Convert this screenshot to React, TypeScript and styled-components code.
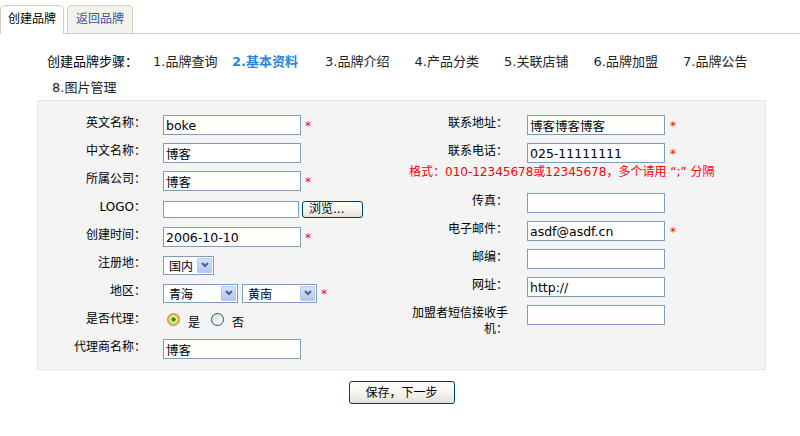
import styled, { createGlobalStyle } from "styled-components";

const FONT = `"DejaVu Sans", "Noto Sans CJK SC", sans-serif`;

const GlobalStyle = createGlobalStyle`
  html, body {
    margin: 0;
    padding: 0;
    background: #fff;
  }
  body {
    font-family: ${FONT};
    font-size: 12px;
    color: #000;
  }
`;

type Side = "left" | "right";

const steps = [
  { text: "1.品牌查询", w: 79 },
  { text: "2.基本资料", w: 93, active: true },
  { text: "3.品牌介绍", w: 89.5 },
  { text: "4.产品分类", w: 89.5 },
  { text: "5.关联店铺", w: 89.5 },
  { text: "6.品牌加盟", w: 89.5 },
  { text: "7.品牌公告", w: 89.5 },
  { text: "8.图片管理", w: 89.5 },
];

export default function App() {
  return (
    <Page>
      <GlobalStyle />
      <TabBar>
        <Tab $active>创建品牌</Tab>
        <Tab>返回品牌</Tab>
      </TabBar>

      <Steps>
        <StepsTitle>创建品牌步骤：</StepsTitle>
        {steps.map((s) => (
          <Step key={s.text} $w={s.w} $active={s.active}>
            {s.text}
          </Step>
        ))}
      </Steps>

      <Panel>
        <Column>
          <Row $side="left">
            <Label>英文名称：</Label>
            <Field>
              <Input defaultValue="boke" />
              <Star>*</Star>
            </Field>
          </Row>
          <Row $side="left">
            <Label>中文名称：</Label>
            <Field>
              <Input defaultValue="博客" />
            </Field>
          </Row>
          <Row $side="left">
            <Label>所属公司：</Label>
            <Field>
              <Input defaultValue="博客" />
              <Star>*</Star>
            </Field>
          </Row>
          <Row $side="left">
            <Label>LOGO：</Label>
            <Field $gap={3}>
              <Input $w={136} $h={17} />
              <Button $w={61} $h={17} $left>
                浏览...
              </Button>
            </Field>
          </Row>
          <Row $side="left">
            <Label>创建时间：</Label>
            <Field>
              <Input defaultValue="2006-10-10" />
              <Star>*</Star>
            </Field>
          </Row>
          <Row $side="left">
            <Label>注册地：</Label>
            <Field>
              <Select $w={51}>
                国内
                <Arrow>
                  <Chevron />
                </Arrow>
              </Select>
            </Field>
          </Row>
          <Row $side="left">
            <Label>地区：</Label>
            <Field>
              <Select $w={75}>
                青海
                <Arrow>
                  <Chevron />
                </Arrow>
              </Select>
              <Select $w={75}>
                黄南
                <Arrow>
                  <Chevron />
                </Arrow>
              </Select>
              <Star>*</Star>
            </Field>
          </Row>
          <Row $side="left">
            <Label>是否代理：</Label>
            <Field>
              <RadioGroup>
                <RadioOption>
                  <Radio $checked />是
                </RadioOption>
                <RadioOption>
                  <Radio />否
                </RadioOption>
              </RadioGroup>
            </Field>
          </Row>
          <Row $side="left">
            <Label>代理商名称：</Label>
            <Field>
              <Input defaultValue="博客" />
            </Field>
          </Row>
        </Column>

        <Column>
          <Row $side="right">
            <Label>联系地址：</Label>
            <Field $gap={5}>
              <Input defaultValue="博客博客博客" />
              <Star>*</Star>
            </Field>
          </Row>
          <Row $side="right">
            <Label>联系电话：</Label>
            <Field $gap={5}>
              <Input defaultValue="025-11111111" />
              <Star>*</Star>
            </Field>
          </Row>
          <Hint>格式：010-12345678或12345678，多个请用 “;” 分隔</Hint>
          <Row $side="right">
            <Label>传真：</Label>
            <Field>
              <Input />
            </Field>
          </Row>
          <Row $side="right">
            <Label>电子邮件：</Label>
            <Field $gap={5}>
              <Input defaultValue="asdf@asdf.cn" />
              <Star>*</Star>
            </Field>
          </Row>
          <Row $side="right">
            <Label>邮编：</Label>
            <Field>
              <Input />
            </Field>
          </Row>
          <Row $side="right">
            <Label>网址：</Label>
            <Field>
              <Input defaultValue="http://" />
            </Field>
          </Row>
          <Row $side="right">
            <Label>加盟者短信接收手机：</Label>
            <Field>
              <Input />
            </Field>
          </Row>
        </Column>
      </Panel>

      <Footer>
        <Button $w={106} $h={23}>
          保存，下一步
        </Button>
      </Footer>
    </Page>
  );
}

function Chevron() {
  return (
    <svg width="8" height="6" viewBox="0 0 8 6">
      <polyline
        points="1,1 4,4 7,1"
        fill="none"
        stroke="#4d6185"
        strokeWidth="2"
      />
    </svg>
  );
}

const Page = styled.div`
  width: 800px;
`;

const TabBar = styled.div`
  display: flex;
  align-items: flex-end;
  gap: 3px;
  height: 28px;
  padding-top: 5px;
  border-bottom: 1px solid #d3d0bd;
`;

const Tab = styled.div<{ $active?: boolean }>`
  box-sizing: border-box;
  height: ${(p) => (p.$active ? 29 : 28)}px;
  margin-bottom: ${(p) => (p.$active ? -1 : 0)}px;
  padding: 0 ${(p) => (p.$active ? 7 : 8)}px;
  line-height: 27px;
  border: 1px solid #d3d0bd;
  border-bottom: none;
  border-radius: 5px 5px 0 0;
  background: ${(p) => (p.$active ? "#fff" : "#f3f3ed")};
  color: ${(p) => (p.$active ? "#000" : "#2f54a0")};
  font-size: 12px;
  white-space: nowrap;
`;

const Steps = styled.div`
  display: flex;
  flex-wrap: wrap;
  row-gap: 6px;
  margin: 18px 0 2px;
  padding-left: 47px;
  font-size: 13px;
  line-height: 20px;
`;

const StepsTitle = styled.span`
  width: 101px;
  color: #000;
  white-space: nowrap;
`;

const Step = styled.span<{ $w: number; $active?: boolean }>`
  box-sizing: border-box;
  width: ${(p) => p.$w}px;
  padding-left: 5px;
  white-space: nowrap;
  color: ${(p) => (p.$active ? "#2b84d6" : "#222")};
  font-weight: ${(p) => (p.$active ? 700 : 400)};
`;

const Panel = styled.div`
  box-sizing: border-box;
  width: 729px;
  margin-left: 37px;
  padding: 10px 0 6px;
  border: 1px solid #e6e6e6;
  background: #f4f4f4;
  display: grid;
  grid-template-columns: 371px 1fr;
  align-items: start;
`;

const Column = styled.div`
  display: flex;
  flex-direction: column;
`;

const Row = styled.div<{ $side: Side }>`
  display: grid;
  grid-template-columns: ${(p) => (p.$side === "left" ? "108px" : "99px")} 1fr;
  column-gap: ${(p) => (p.$side === "left" ? 17 : 19)}px;
  align-items: start;
  padding: 4px 0;
`;

const Label = styled.div`
  text-align: right;
  line-height: 16px;
  font-size: 12px;
  color: #000;
`;

const Field = styled.div<{ $gap?: number }>`
  display: flex;
  align-items: center;
  gap: ${(p) => p.$gap ?? 4}px;
  height: 20px;
`;

const Input = styled.input<{ $w?: number; $h?: number }>`
  box-sizing: border-box;
  width: ${(p) => p.$w ?? 138}px;
  height: ${(p) => p.$h ?? 20}px;
  margin: 0;
  padding: 0 2px;
  border: 1px solid #7f9db9;
  background: #fff;
  font-family: ${FONT};
  font-size: 12.5px;
  line-height: 18px;
  color: #000;
  outline: none;
`;

const Star = styled.span`
  color: #ff0000;
  font-size: 12px;
  line-height: 1;
  margin-top: 2px;
`;

const Hint = styled.div`
  margin: -3px 0 9px;
  line-height: 16px;
  font-size: 12px;
  color: #ff0000;
  white-space: nowrap;
`;

const Select = styled.div<{ $w: number }>`
  box-sizing: border-box;
  width: ${(p) => p.$w}px;
  height: 19px;
  padding: 0 1px 0 5px;
  border: 1px solid #7f9db9;
  background: #fff;
  display: flex;
  align-items: center;
  justify-content: space-between;
  font-size: 12px;
`;

const Arrow = styled.span`
  box-sizing: border-box;
  width: 15px;
  height: 15px;
  border: 1px solid #b7c9f1;
  border-radius: 1px;
  background: linear-gradient(#d6e2fd, #b2c7f6);
  display: flex;
  align-items: center;
  justify-content: center;
`;

const RadioGroup = styled.div`
  display: flex;
  align-items: center;
  gap: 11px;
  padding-left: 4px;
`;

const RadioOption = styled.label`
  display: flex;
  align-items: center;
  gap: 8px;
  font-size: 12px;
`;

const Radio = styled.span<{ $checked?: boolean }>`
  box-sizing: border-box;
  width: 13px;
  height: 13px;
  margin-top: -3px;
  border-radius: 50%;
  border: 1px solid ${(p) => (p.$checked ? "#b8913c" : "#1c5180")};
  background: ${(p) =>
    p.$checked
      ? "radial-gradient(circle, #22a322 0 2px, #fff 2.5px 3px, #f6c14c 3.6px 5px, #e4b044 5.5px)"
      : "linear-gradient(135deg, #dcdcd5, #fff)"};
`;

const Button = styled.button<{ $w: number; $h: number; $left?: boolean }>`
  box-sizing: border-box;
  width: ${(p) => p.$w}px;
  height: ${(p) => p.$h}px;
  margin: 0;
  padding: ${(p) => (p.$left ? "0 0 0 6px" : "0")};
  text-align: ${(p) => (p.$left ? "left" : "center")};
  border: 1px solid #003c74;
  border-radius: 3px;
  background: linear-gradient(#ffffff, #f3f3ee 55%, #e2e1d9);
  font-family: ${FONT};
  font-size: 12px;
  line-height: 1;
  color: #000;
  cursor: pointer;
`;

const Footer = styled.div`
  width: 729px;
  margin: 11px 0 0 37px;
  display: flex;
  justify-content: center;
`;
